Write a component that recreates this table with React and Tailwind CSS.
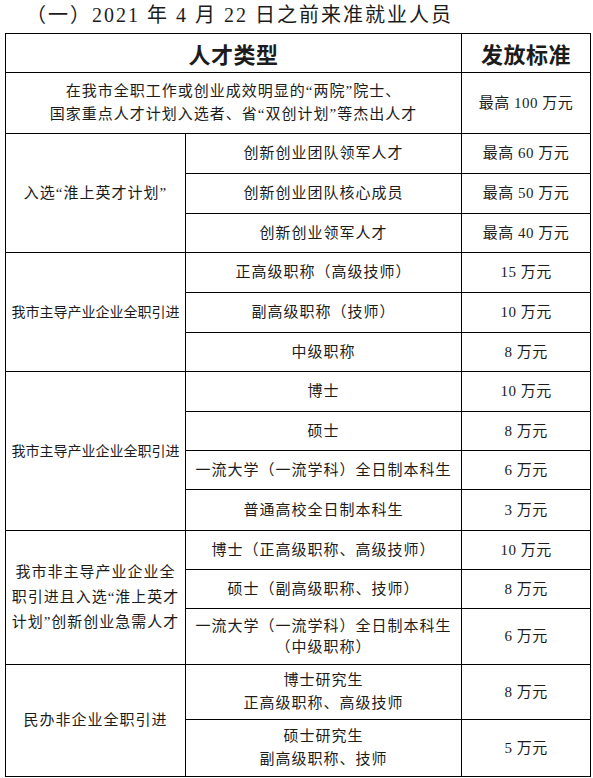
const FONT = { fontFamily: '"Liberation Serif", "Noto Sans CJK SC", serif' };

const td = "border border-black text-center align-middle p-0";
const c2 = td + " text-[15px] tracking-[1px]";
const c3 = td + " text-[15px] tracking-[0.5px]";

function Row({ h, label, amount }) {
  return (
    <tr className={h}>
      <td className={c2}>{label}</td>
      <td className={c3}>{amount}</td>
    </tr>
  );
}

export default function App() {
  return (
    <div className="w-[593px] h-[778px] bg-white text-[#1c1c1c] overflow-hidden" style={FONT}>
      <div className="h-[33px] pl-[26px] text-[20px] tracking-[2px] leading-[33px] pt-[1px] -translate-y-[2px]">
        （一）2021 年 4 月 22 日之前来准就业人员
      </div>
      <table className="ml-[5px] w-[585px] table-fixed border-collapse border border-black">
        <colgroup>
          <col className="w-[180px]" />
          <col className="w-[276px]" />
          <col className="w-[129px]" />
        </colgroup>
        <tbody>
          <tr className="h-[39px]">
            <td colSpan={2} className={td + " text-[22px] font-bold tracking-[0.5px]"} style={{ fontFamily: '"Noto Sans CJK SC", sans-serif' }}>
              人才类型
            </td>
            <td className={td + " text-[22px] font-bold tracking-[0.5px]"} style={{ fontFamily: '"Noto Sans CJK SC", sans-serif' }}>
              发放标准
            </td>
          </tr>
          <tr className="h-[61px]">
            <td colSpan={2} className={td + " text-[15px] tracking-[1px] leading-[23px]"}>
              在我市全职工作或创业成效明显的“两院”院士、
              <br />
              国家重点人才计划入选者、省“双创计划”等杰出人才
            </td>
            <td className={c3}>最高 100 万元</td>
          </tr>

          <tr className="h-[40px]">
            <td rowSpan={3} className={td + " text-[15px] tracking-[1px]"}>
              入选“淮上英才计划”
            </td>
            <td className={c2}>创新创业团队领军人才</td>
            <td className={c3}>最高 60 万元</td>
          </tr>
          <Row h="h-[40px]" label="创新创业团队核心成员" amount="最高 50 万元" />
          <Row h="h-[39px]" label="创新创业领军人才" amount="最高 40 万元" />

          <tr className="h-[40px]">
            <td rowSpan={3} className={td + " text-[14px]"}>
              我市主导产业企业全职引进
            </td>
            <td className={c2}>正高级职称（高级技师）</td>
            <td className={c3}>15 万元</td>
          </tr>
          <Row h="h-[40px]" label="副高级职称（技师）" amount="10 万元" />
          <Row h="h-[39px]" label="中级职称" amount="8 万元" />

          <tr className="h-[40px]">
            <td rowSpan={4} className={td + " text-[14px]"}>
              我市主导产业企业全职引进
            </td>
            <td className={c2}>博士</td>
            <td className={c3}>10 万元</td>
          </tr>
          <Row h="h-[39px]" label="硕士" amount="8 万元" />
          <Row h="h-[39px]" label="一流大学（一流学科）全日制本科生" amount="6 万元" />
          <Row h="h-[41px]" label="普通高校全日制本科生" amount="3 万元" />

          <tr className="h-[39px]">
            <td rowSpan={3} className={td + " text-[15px] tracking-[1px] leading-[25px]"}>
              我市非主导产业企业全
              <br />
              职引进且入选“淮上英才
              <br />
              计划”创新创业急需人才
            </td>
            <td className={c2}>博士（正高级职称、高级技师）</td>
            <td className={c3}>10 万元</td>
          </tr>
          <Row h="h-[39px]" label="硕士（副高级职称、技师）" amount="8 万元" />
          <tr className="h-[56px]">
            <td className={c2 + " leading-[21px]"}>
              一流大学（一流学科）全日制本科生
              <br />
              （中级职称）
            </td>
            <td className={c3}>6 万元</td>
          </tr>

          <tr className="h-[55px]">
            <td rowSpan={2} className={td + " text-[15px] tracking-[1px]"}>
              民办非企业全职引进
            </td>
            <td className={c2 + " leading-[23px]"}>
              博士研究生
              <br />
              正高级职称、高级技师
            </td>
            <td className={c3}>8 万元</td>
          </tr>
          <tr className="h-[57px]">
            <td className={c2 + " leading-[23px]"}>
              硕士研究生
              <br />
              副高级职称、技师
            </td>
            <td className={c3}>5 万元</td>
          </tr>
        </tbody>
      </table>
    </div>
  );
}
